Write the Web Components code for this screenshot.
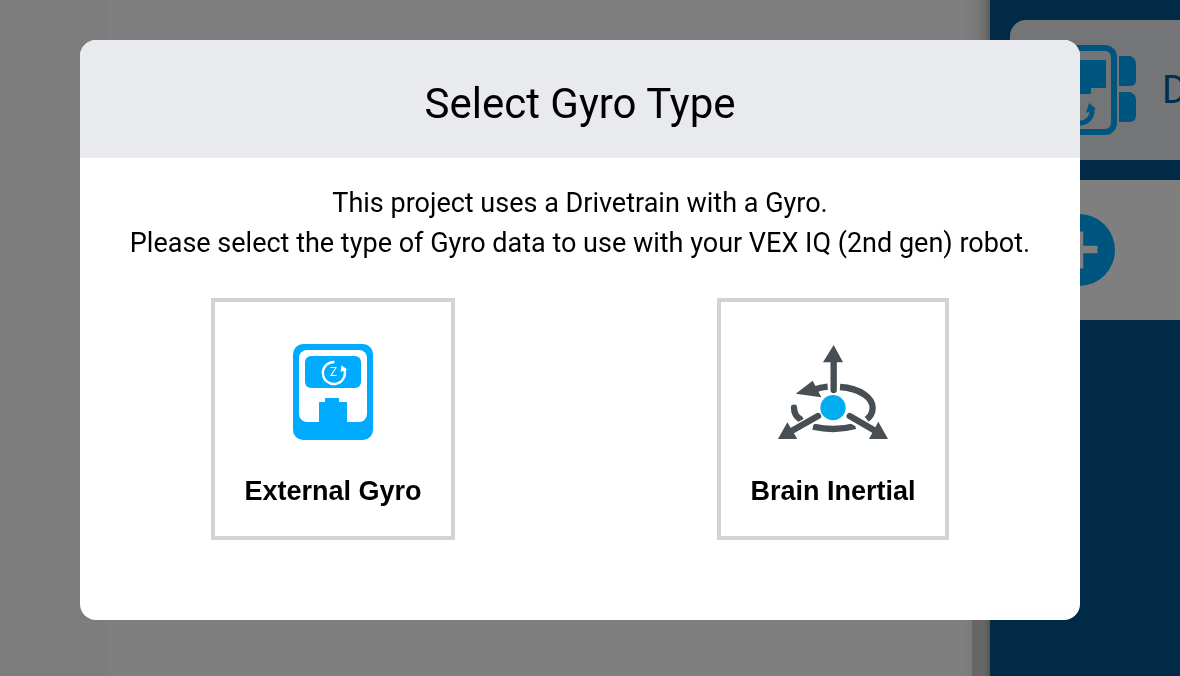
<!DOCTYPE html>
<html lang="en">
<head>
<meta charset="utf-8">
<title>Select Gyro Type</title>
<style>
  body {
    margin: 0;
    font-family: Roboto, "Liberation Sans", sans-serif;
    color: #000;
  }
</style>
</head>
<body>
<gyro-app>
  <device-panel slot="panel">
    <device-card header label="D">
      <svg slot="icon" width="114" height="90" viewBox="0 0 114 90" fill="#00aaff">
        <rect x="22" y="3" width="70" height="84" rx="9" fill="none" stroke="#00aaff" stroke-width="6"/>
        <path d="M17 11H6Q0 13 0 19V35Q0 41 6 41H17Z M17 47H6Q0 49 0 55V70Q0 77 6 77H17Z"/>
        <path d="M97 11H108Q114 13 114 19V35Q114 41 108 41H97Z M97 47H108Q114 49 114 55V70Q114 77 108 77H97Z"/>
        <path d="M30 15H83Q84 15 84 16V42Q84 43 83 43H69V48Q69 49 68 49H46Q45 49 45 48V43H30Q29 43 29 42V16Q29 15 30 15Z"/>
        <path d="M58 54A12 12 0 1 0 70 65" fill="none" stroke="#00aaff" stroke-width="5"/>
        <path d="M67 58L74 64L64 68Z"/>
      </svg>
    </device-card>
    <device-card add>
      <svg slot="icon" width="72" height="72" viewBox="0 0 72 72">
        <circle cx="36" cy="36" r="36" fill="#00aaff"/>
        <path d="M36.500 17.500V54.500M18 35.500H54.500" stroke="#fff" stroke-width="7.500"/>
      </svg>
    </device-card>
  </device-panel>

  <modal-dialog slot="modal">
    <span slot="title">Select Gyro Type</span>
    <span slot="text">This project uses a Drivetrain with a Gyro.<br>Please select the type of Gyro data to use with your VEX IQ (2nd gen) robot.</span>

    <gyro-option>
      <svg slot="icon" width="80" height="96" viewBox="0 0 80 96" fill="#00aaff">
        <rect width="80" height="96" rx="10"/>
        <rect x="6" y="6" width="68" height="72" rx="8" fill="#fff"/>
        <rect x="12" y="12" width="56" height="32" rx="6"/>
        <path d="M26 78V59Q26 58 27 58H32V55Q32 54 33 54H45Q46 54 46 55V58H53Q54 58 54 59V78Z"/>
        <path d="M41.500 18A11 11 0 1 0 51.500 26" fill="none" stroke="#fff" stroke-width="2.400"/>
        <path d="M48.500 21.300L54.200 25.600L47.500 28Z" fill="#fff"/>
        <text x="40.500" y="32" text-anchor="middle" font-family="Inter, sans-serif" font-size="12" font-weight="400" fill="#fff">Z</text>
      </svg>
      External Gyro
    </gyro-option>

    <gyro-option>
      <svg slot="icon" width="110" height="96" viewBox="39 42 330 288" fill="#474e54">
        <g fill="none" stroke="#474e54" stroke-width="19">
          <path d="M225 171C288 175 323 205 323 233C323 247 317 259 305 268"/>
          <path d="M271 288C231 299 184 299 144 290"/>
          <path d="M105 267C93 259 87 248 87 233" stroke-linecap="round"/>
          <path d="M188 170Q166 172 145 180"/>
        </g>
        <!-- white gaps where the arrows cross the ring -->
        <path d="M246 257L342 312M163 257L67 312" stroke="#fff" stroke-width="30" fill="none"/>
        <path d="M206 90V180M254 258L330 302M159 258L78 304" stroke="#474e54" stroke-width="19" stroke-linecap="round" fill="none"/>
        <path d="M206 45L234 97H174Z"/>
        <path d="M92 191L143 152L169 202Z"/>
        <path d="M39 327L67 277L97 327Z"/>
        <path d="M369 327L340 275L312 327Z"/>
        <circle cx="204" cy="233" r="38" fill="#00aeef"/>
      </svg>
      Brain Inertial
    </gyro-option>
  </modal-dialog>
</gyro-app>

<script>
// attaches an open shadow root filled from a template string
function render(host, html) {
  const template = document.createElement('template');
  template.innerHTML = html;
  host.attachShadow({mode: 'open'}).appendChild(template.content.cloneNode(true));
}

class GyroApp extends HTMLElement {
  constructor() {
    super();
    render(this, `
    <style>
      :host {
        display: grid;
        grid-template-columns: 108px 1fr 190px;
        min-height: 100vh;
        background: #fff;
      }

      .toolbox {
        background: #fbfbfb;
      }

      .workspace {
        display: flex;
        justify-content: flex-end;
        align-items: flex-end;
        background: linear-gradient(to left, #b4b4b4, #d8d8d8 5px, #eee 12px, #fff 28px);
      }

      .scrollbar {
        width: 18px;
        height: 80px;
        background: linear-gradient(to left, #aaa, #cdcdcd 6px);
      }

      .overlay {
        position: fixed;
        inset: 0;
        overflow: auto;
        padding: 40px 100px 56px 80px;
        background: rgba(0, 0, 0, 0.5);
      }
    </style>
    <div class="toolbox"></div>
    <div class="workspace"><div class="scrollbar"></div></div>
    <slot name="panel"></slot>
    <div class="overlay"><slot name="modal"></slot></div>
    `);
  }
}

class DevicePanel extends HTMLElement {
  constructor() {
    super();
    render(this, `
    <style>
      :host {
        display: flex;
        flex-direction: column;
        gap: 20px;
        padding: 20px 0 20px 20px;
        background: #00548c;
        overflow: hidden;
      }
    </style>
    <slot></slot>
    `);
  }
}

class DeviceCard extends HTMLElement {
  constructor() {
    super();
    render(this, `
    <style>
      :host {
        display: block;
        background: #fff;
      }

      :host([header]) {
        background: #e8eaee;
        border-radius: 16px 0 0 0;
      }

      button {
        display: flex;
        align-items: center;
        gap: 26px;
        width: 100%;
        height: 140px;
        padding: 0 0 0 12px;
        border: none;
        background: none;
        color: #00609f;
        font: 400 38px Roboto, sans-serif;
        overflow: hidden;
        cursor: pointer;
      }

      .icon {
        display: flex;
        justify-content: center;
        flex: 0 0 114px;
      }
    </style>
    <button type="button"><span class="icon"><slot name="icon"></slot></span><span class="label"></span></button>
    `);
    this.shadowRoot.querySelector('.label').textContent = this.getAttribute('label') || '';
    if (this.hasAttribute('add')) {
      this.shadowRoot.querySelector('button').setAttribute('aria-label', 'Add a device');
    }
  }
}

class ModalDialog extends HTMLElement {
  constructor() {
    super();
    render(this, `
    <style>
      :host {
        display: block;
        border-radius: 16px;
        background: #fff;
        text-align: center;
        overflow: hidden;
      }

      header {
        padding: 39px 20px 29px;
        background: #e9eaee;
      }

      h1 {
        margin: 0;
        font-size: 42px;
        font-weight: 400;
        line-height: 50px;
      }

      p {
        margin: 0;
        padding: 25px 20px 35px;
        font-size: 27px;
        line-height: 40px;
      }

      .options {
        display: flex;
        justify-content: space-around;
        padding-bottom: 80px;
      }
    </style>
    <section role="dialog" aria-labelledby="title">
      <header><h1 id="title"><slot name="title"></slot></h1></header>
      <p><slot name="text"></slot></p>
      <div class="options"><slot></slot></div>
    </section>
    `);
  }
}

class GyroOption extends HTMLElement {
  constructor() {
    super();
    render(this, `
    <style>
      :host {
        display: block;
      }

      button {
        display: flex;
        flex-direction: column;
        align-items: center;
        gap: 36px;
        padding: 42px 29px 30px;
        border: 4px solid #d3d3d3;
        background: #fff;
        color: #000;
        font: bold 27px/30px "Liberation Sans", Arial, sans-serif;
        cursor: pointer;
      }

      button:hover {
        border-color: #00aaff;
      }
    </style>
    <button type="button"><slot name="icon"></slot><span><slot></slot></span></button>
    `);
  }
}

customElements.define('gyro-app', GyroApp);
customElements.define('device-panel', DevicePanel);
customElements.define('device-card', DeviceCard);
customElements.define('modal-dialog', ModalDialog);
customElements.define('gyro-option', GyroOption);
</script>
</body>
</html>
